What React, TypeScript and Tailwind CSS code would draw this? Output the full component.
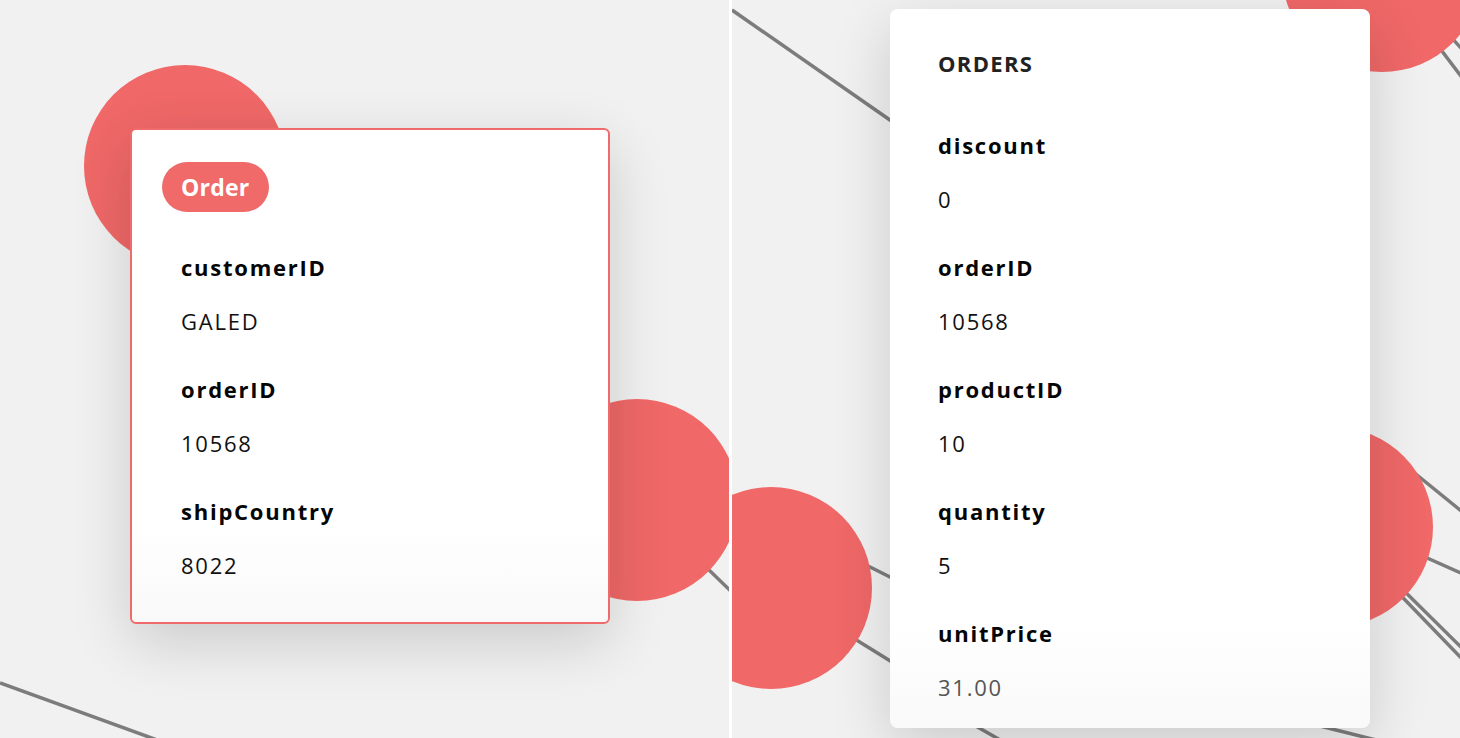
import React from "react";

type Field = { label: string; value: string; muted?: boolean };

function Fields({ fields }: { fields: Field[] }) {
  return (
    <div className="flex flex-col gap-[40px]">
      {fields.map((f) => (
        <div key={f.label} className="flex flex-col gap-[26px]">
          <div className="h-[28px] leading-[28px] text-[22px] font-bold tracking-[0.08em] text-[#050505]">
            {f.label}
          </div>
          <div
            className={
              "h-[28px] leading-[28px] text-[22px] font-normal tracking-[0.08em] " +
              (f.muted ? "text-[#555555]" : "text-[#111111]")
            }
          >
            {f.value}
          </div>
        </div>
      ))}
    </div>
  );
}

const RED = "#f06868";
const LINE = "#7c7c7c";

function LeftPanel() {
  return (
    <div className="relative h-[738px] w-[729px] shrink-0 overflow-hidden bg-[#f1f1f1]">
      <svg className="absolute inset-0" width="729" height="738" viewBox="0 0 729 738">
        <line x1="0" y1="683" x2="160" y2="741" stroke={LINE} strokeWidth="3.5" />
        <line x1="637" y1="500" x2="740" y2="600" stroke={LINE} strokeWidth="3.5" />
        <circle cx="185" cy="166" r="101" fill={RED} />
        <circle cx="637" cy="500" r="101" fill={RED} />
      </svg>
      <div className="absolute left-[130px] top-[128px] w-[480px] rounded-[6px] border-2 border-[#ef6a6a] bg-gradient-to-b from-white from-80% to-[#f9f9f9] px-[30px] pb-[42px] pt-[32px] shadow-[0_18px_60px_rgba(0,0,0,0.16)]">
        <div className="inline-flex h-[50px] items-center rounded-full bg-[#f06a6a] px-[19px] text-[23px] font-bold tracking-[0.01em] text-white">
          Order
        </div>
        <div className="mt-[41px] pb-[1px] pl-[19px]">
          <Fields
            fields={[
              { label: "customerID", value: "GALED" },
              { label: "orderID", value: "10568" },
              { label: "shipCountry", value: "8022" },
            ]}
          />
        </div>
      </div>
    </div>
  );
}

function RightPanel() {
  return (
    <div className="relative h-[738px] w-[728px] shrink-0 overflow-hidden bg-[#f1f1f1]">
      <svg className="absolute inset-0" width="728" height="738" viewBox="732 0 728 738">
        <line x1="732" y1="10" x2="900" y2="127" stroke={LINE} strokeWidth="3.5" />
        <line x1="820" y1="542" x2="900" y2="582" stroke={LINE} strokeWidth="3.5" />
        <line x1="800" y1="605" x2="900" y2="667" stroke={LINE} strokeWidth="3.5" />
        <line x1="1382" y1="-28" x2="1470" y2="88" stroke={LINE} strokeWidth="3.5" />
        <line x1="1390" y1="-30" x2="1470" y2="58" stroke={LINE} strokeWidth="3.5" />
        <line x1="1380" y1="445" x2="1470" y2="518" stroke={LINE} strokeWidth="3.5" />
        <line x1="1380" y1="537" x2="1470" y2="577" stroke={LINE} strokeWidth="3.5" />
        <line x1="1380" y1="574" x2="1470" y2="667" stroke={LINE} strokeWidth="3.5" />
        <line x1="1385" y1="572" x2="1470" y2="656" stroke={LINE} strokeWidth="3.5" />
        <line x1="1300" y1="721" x2="1380" y2="741" stroke={LINE} strokeWidth="3.5" />
        <line x1="960" y1="717" x2="1002" y2="741" stroke={LINE} strokeWidth="3.5" />
        <circle cx="1382" cy="-28" r="100" fill={RED} />
        <circle cx="771" cy="588" r="101" fill={RED} />
        <circle cx="1333" cy="527" r="100" fill={RED} />
      </svg>
      <div className="absolute left-[158px] top-[9px] h-[719px] w-[480px] rounded-[8px] bg-gradient-to-b from-white from-85% to-[#f9f9f9] pb-[27px] pl-[48px] pt-[40px] shadow-[0_18px_60px_rgba(0,0,0,0.16)]">
        <div className="h-[28px] leading-[28px] text-[22px] font-bold uppercase tracking-[0.06em] text-[#222222]">
          Orders
        </div>
        <div className="mt-[54px]">
          <Fields
            fields={[
              { label: "discount", value: "0" },
              { label: "orderID", value: "10568" },
              { label: "productID", value: "10" },
              { label: "quantity", value: "5" },
              { label: "unitPrice", value: "31.00", muted: true },
            ]}
          />
        </div>
      </div>
    </div>
  );
}

export default function App() {
  return (
    <div
      className="flex h-[738px] w-[1460px] overflow-hidden bg-white"
      style={{ fontFamily: '"Open Sans", "Noto Sans", sans-serif' }}
    >
      <LeftPanel />
      <div className="w-[3px] shrink-0 bg-white" />
      <RightPanel />
    </div>
  );
}
